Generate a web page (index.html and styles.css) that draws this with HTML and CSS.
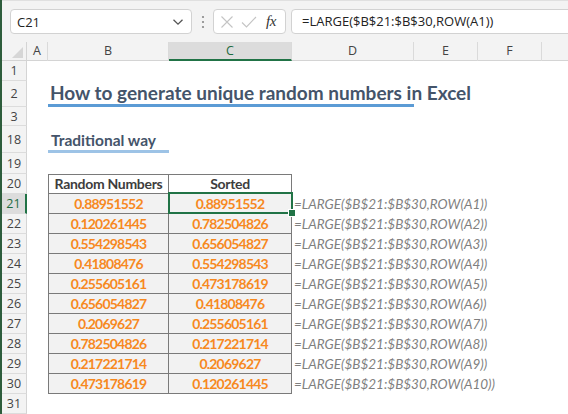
FILE: index.html
```html
<!DOCTYPE html>
<html>
<head>
<meta charset="utf-8">
<link rel="stylesheet" href="styles.css">
</head>
<body>
<div class="app">
  <div class="topbar">
    <div class="namebox">
      <span class="nb-text">C21</span>
      <svg class="chev" width="12" height="8" viewBox="0 0 12 8"><path d="M1.5 1.8 L6 6.2 L10.5 1.8" fill="none" stroke="#555" stroke-width="1.3"/></svg>
    </div>
    <div class="sep">
      <svg width="4" height="14" viewBox="0 0 4 14"><circle cx="2" cy="2" r="1.1" fill="#888"/><circle cx="2" cy="7" r="1.1" fill="#888"/><circle cx="2" cy="12" r="1.1" fill="#888"/></svg>
    </div>
    <div class="fxbox">
      <svg width="14" height="14" viewBox="0 0 14 14"><path d="M1.5 1.5 L12.5 12.5 M12.5 1.5 L1.5 12.5" stroke="#c4c4c4" stroke-width="1.1" fill="none"/></svg>
      <svg width="16" height="14" viewBox="0 0 16 14"><path d="M1 7.5 L5.5 12 L15 2" stroke="#c4c4c4" stroke-width="1.1" fill="none"/></svg>
      <span class="fx">fx</span>
    </div>
    <div class="formula">=LARGE($B$21:$B$30,ROW(A1))</div>
  </div>

  <div class="sheet">
    <div class="row hdr">
      <div class="corner"><span class="tri"></span></div>
      <div class="ch">A</div>
      <div class="ch">B</div>
      <div class="ch sel">C</div>
      <div class="ch">D</div>
      <div class="ch">E</div>
      <div class="ch">F</div>
      <div class="ch last"></div>
    </div>

    <div class="row h20"><div class="rh">1</div></div>

    <div class="row h26">
      <div class="rh">2</div>
      <div class="gap"></div>
      <div class="title-cell"><span class="title">How to generate unique random numbers in Excel</span></div>
    </div>

    <div class="row h19"><div class="rh">3</div></div>

    <div class="row h27">
      <div class="rh">18</div>
      <div class="gap"></div>
      <div class="sub-cell"><span class="subtitle">Traditional way</span></div>
    </div>

    <div class="row h21"><div class="rh">19</div></div>

    <div class="row h20">
      <div class="rh">20</div>
      <div class="gap"></div>
      <div class="tc th first top">Random Numbers</div>
      <div class="tc th top">Sorted</div>
    </div>

    <div class="row h20">
      <div class="rh rsel">21</div>
      <div class="gap"></div>
      <div class="tc first">0.88951552</div>
      <div class="tc active">0.88951552</div>
      <div class="fm">=LARGE($B$21:$B$30,ROW(A1))</div>
    </div>
    <div class="row h20">
      <div class="rh">22</div>
      <div class="gap"></div>
      <div class="tc first">0.120261445</div>
      <div class="tc">0.782504826</div>
      <div class="fm">=LARGE($B$21:$B$30,ROW(A2))</div>
    </div>
    <div class="row h20">
      <div class="rh">23</div>
      <div class="gap"></div>
      <div class="tc first">0.554298543</div>
      <div class="tc">0.656054827</div>
      <div class="fm">=LARGE($B$21:$B$30,ROW(A3))</div>
    </div>
    <div class="row h20">
      <div class="rh">24</div>
      <div class="gap"></div>
      <div class="tc first">0.41808476</div>
      <div class="tc">0.554298543</div>
      <div class="fm">=LARGE($B$21:$B$30,ROW(A4))</div>
    </div>
    <div class="row h20">
      <div class="rh">25</div>
      <div class="gap"></div>
      <div class="tc first">0.255605161</div>
      <div class="tc">0.473178619</div>
      <div class="fm">=LARGE($B$21:$B$30,ROW(A5))</div>
    </div>
    <div class="row h20">
      <div class="rh">26</div>
      <div class="gap"></div>
      <div class="tc first">0.656054827</div>
      <div class="tc">0.41808476</div>
      <div class="fm">=LARGE($B$21:$B$30,ROW(A6))</div>
    </div>
    <div class="row h20">
      <div class="rh">27</div>
      <div class="gap"></div>
      <div class="tc first">0.2069627</div>
      <div class="tc">0.255605161</div>
      <div class="fm">=LARGE($B$21:$B$30,ROW(A7))</div>
    </div>
    <div class="row h20">
      <div class="rh">28</div>
      <div class="gap"></div>
      <div class="tc first">0.782504826</div>
      <div class="tc">0.217221714</div>
      <div class="fm">=LARGE($B$21:$B$30,ROW(A8))</div>
    </div>
    <div class="row h20">
      <div class="rh">29</div>
      <div class="gap"></div>
      <div class="tc first">0.217221714</div>
      <div class="tc">0.2069627</div>
      <div class="fm">=LARGE($B$21:$B$30,ROW(A9))</div>
    </div>
    <div class="row h20">
      <div class="rh">30</div>
      <div class="gap"></div>
      <div class="tc first">0.473178619</div>
      <div class="tc">0.120261445</div>
      <div class="fm">=LARGE($B$21:$B$30,ROW(A10))</div>
    </div>
    <div class="row h20"><div class="rh">31</div></div>
  </div>
</div>
</body>
</html>
```

FILE: styles.css
```css
* { box-sizing: border-box; }
html, body { margin: 0; padding: 0; }
body {
  width: 568px;
  height: 414px;
  overflow: hidden;
  background: #ffffff;
  font-family: "Open Sans", "Noto Sans", sans-serif;
}
.app {
  width: 568px;
  height: 414px;
  overflow: hidden;
  border-left: 2px solid #2e5d3c;
}

/* ---------- top bar ---------- */
.topbar {
  height: 42px;
  background: #f3f3f3;
  border-top: 1px solid #e0e0e0;
  display: flex;
  align-items: flex-start;
  padding-top: 8px;
  padding-left: 8px;
}
.namebox {
  width: 182px;
  height: 25px;
  background: #fff;
  border: 1px solid #d2d2d2;
  border-radius: 4px;
  display: flex;
  align-items: center;
  justify-content: space-between;
  padding: 0 7px 0 6px;
  font-size: 13px;
  color: #222;
}
.chev { margin-top: 1px; }
.sep {
  width: 21px;
  height: 25px;
  display: flex;
  align-items: center;
  justify-content: center;
}
.fxbox {
  width: 73px;
  height: 25px;
  background: #fff;
  border: 1px solid #d2d2d2;
  border-radius: 4px;
  display: flex;
  align-items: center;
  padding-left: 6px;
  gap: 7px;
}
.fx {
  font-family: "Liberation Serif", "DejaVu Serif", serif;
  font-style: italic;
  font-size: 15px;
  color: #333;
  margin-left: 2px;
  letter-spacing: -0.5px;
}
.formula {
  margin-left: 5px;
  flex: 1;
  height: 25px;
  margin-right: -10px;
  background: #fff;
  border: 1px solid #d2d2d2;
  border-radius: 4px;
  padding-left: 10px;
  font-size: 13px;
  line-height: 23px;
  color: #222;
}

/* ---------- sheet grid ---------- */
.row {
  display: grid;
  grid-template-columns: 25px 21px 121px 123px 122px 64px 64px 26px;
}
.h19 { height: 19px; }
.h20 { height: 20px; }
.h21 { height: 21px; }
.h26 { height: 26px; }
.h27 { height: 27px; }

.hdr {
  height: 19px;
  background: #f3f3f3;
  border-bottom: 1px solid #d4d4d4;
}
.corner {
  position: relative;
  border-right: 1px solid #d4d4d4;
}
.tri {
  position: absolute;
  right: 3px;
  bottom: 3px;
  width: 0;
  height: 0;
  border-left: 11px solid transparent;
  border-bottom: 11px solid #d6d6d6;
}
.ch {
  border-right: 1px solid #dadada;
  text-align: center;
  font-size: 12.5px;
  line-height: 18px;
  color: #444;
}
.ch.last { border-right: none; }
.ch.sel {
  background: #dcdcdc;
  border-bottom: 2px solid #217346;
  color: #1e6b3f;
  height: 19px;
}

.rh {
  grid-column: 1;
  background: #f3f3f3;
  border-right: 1px solid #d4d4d4;
  border-bottom: 1px solid #dcdcdc;
  text-align: center;
  font-size: 12.5px;
  color: #444;
  display: flex;
  align-items: center;
  justify-content: center;
}
.rh.rsel {
  background: #dcdcdc;
  border-right: 2px solid #217346;
  color: #1e6b3f;
}
.gap { grid-column: 2; }

.title-cell {
  grid-column: 3 / span 3;
  border-bottom: 3px solid #5b9bd5;
  white-space: nowrap;
  padding-left: 2px;
  display: flex;
  align-items: flex-end;
}
.title {
  font-family: "Lato", "Liberation Sans", sans-serif;
  font-weight: 700;
  font-size: 19px;
  line-height: 22px;
  color: #44546a;
}
.sub-cell {
  grid-column: 3;
  border-bottom: 3px solid #9dc3e6;
  white-space: nowrap;
  padding-left: 3px;
  display: flex;
  align-items: flex-end;
  padding-bottom: 1px;
}
.subtitle {
  font-family: "Lato", "Liberation Sans", sans-serif;
  font-weight: 700;
  font-size: 15.5px;
  color: #44546a;
}

.tc {
  border-right: 1px solid #7a7a7a;
  border-bottom: 1px solid #7a7a7a;
  background: #f2f2f2;
  text-align: center;
  font-family: "Lato", "Liberation Sans", sans-serif;
  font-weight: 700;
  font-size: 14px;
  letter-spacing: -0.8px;
  line-height: 19px;
  color: #f7891f;
}
.tc.first { border-left: 1px solid #7a7a7a; }
.tc.top { border-top: 1px solid #7a7a7a; line-height: 18px; }
.tc.th {
  background: #ffffff;
  color: #3d3d3d;
  font-size: 14px;
  letter-spacing: -0.3px;
}
.tc.active { position: relative; }
.tc.active::after {
  content: "";
  position: absolute;
  left: -1px;
  top: -2px;
  right: -2px;
  bottom: -1px;
  border: 2px solid #217346;
}
.tc.active::before {
  content: "";
  position: absolute;
  right: -5px;
  bottom: -4px;
  width: 6px;
  height: 6px;
  background: #217346;
  border: 1px solid #fff;
  z-index: 2;
}
.fm {
  grid-column: 5;
  white-space: nowrap;
  padding-left: 2px;
  font-family: "Lato", "Liberation Sans", sans-serif;
  font-style: italic;
  font-size: 13.5px;
  line-height: 20px;
  color: #7f7f7f;
}
```
